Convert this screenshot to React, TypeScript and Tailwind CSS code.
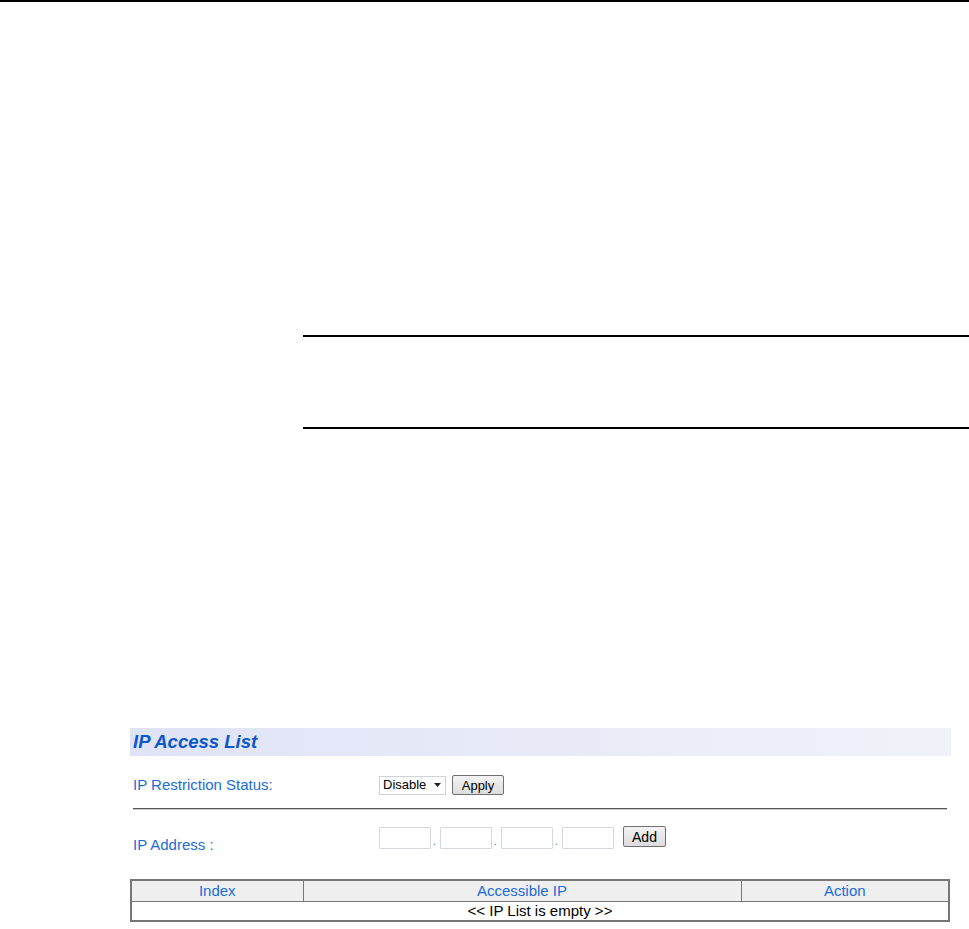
import React from 'react';

const blue = 'text-[#1c6cd6]';

function IpBox() {
  return <div className="w-[52px] h-[22px] border border-[#d4d8de] bg-white rounded-[1px]" />;
}

function Dot() {
  return <span className="text-[10px] text-[#1c6cd6] leading-none w-[5px] pb-[2px]">.</span>;
}

export default function App() {
  return (
    <div className="w-[969px] h-[929px] bg-white font-['Liberation_Sans',Arial,sans-serif] overflow-hidden">
      {/* page rule at top */}
      <div className="h-[2px] bg-black" />

      {/* empty box between rules */}
      <div className="mt-[333px] ml-[303px]">
        <div className="h-[2px] bg-black" />
        <div className="h-[90px]" />
        <div className="h-[2px] bg-black" />
      </div>

      {/* IP Access List panel */}
      <div className="mt-[299px] ml-[130px] w-[821px]">
        <div className="h-[28px] bg-gradient-to-r from-[#dfe3f6] to-[#f1f2f9] flex items-center pl-[3px]">
          <span className="text-[18.5px] font-bold italic text-[#0a57cc] leading-none">IP Access List</span>
        </div>

        <div className="mt-[19px] flex items-center h-[20px]">
          <span className={`w-[249px] pl-[3px] text-[15px] ${blue}`}>IP Restriction Status:</span>
          <div className="w-[67px] h-[19px] border border-[#cfd3d9] bg-white flex items-center pl-[3px] pr-[3px] text-[13px] text-black">
            <span className="flex-1">Disable</span>
            <svg width="8" height="5" viewBox="0 0 8 5"><path d="M0 0h7L3.5 4z" fill="#222" /></svg>
          </div>
          <button className="ml-[6px] w-[52px] h-[20px] border border-[#707070] rounded-[2px] bg-gradient-to-b from-[#f3f3f3] to-[#dcdcdc] text-[13px] text-black leading-none">
            Apply
          </button>
        </div>

        <div className="mt-[13px] ml-[3px] w-[814px] h-[2px] bg-[#555] border-b border-[#ccc]" />

        <div className="mt-[16px] flex h-[23px]">
          <span className={`w-[249px] pl-[3px] pt-[11px] text-[15px] ${blue} leading-none`}>IP Address :</span>
          <div className="flex items-end gap-[2px]">
            <IpBox />
            <Dot />
            <IpBox />
            <Dot />
            <IpBox />
            <Dot />
            <IpBox />
          </div>
          <button className="ml-[9px] w-[43px] h-[21px] border border-[#707070] rounded-[2px] bg-gradient-to-b from-[#f3f3f3] to-[#dcdcdc] text-[14px] text-black leading-none">
            Add
          </button>
        </div>

        <table className="mt-[30px] w-[820px] border-collapse border-2 border-[#777] text-[15px]">
          <thead>
            <tr className="bg-[#efefef] h-[21px]">
              <th className={`w-[172px] border border-[#777] font-normal ${blue} leading-none`}>Index</th>
              <th className={`w-[438px] border border-[#777] font-normal ${blue} leading-none`}>Accessible IP</th>
              <th className={`border border-[#777] font-normal ${blue} leading-none`}>Action</th>
            </tr>
          </thead>
          <tbody>
            <tr className="h-[20px]">
              <td colSpan={3} className="border border-[#777] text-center text-black leading-none">
                &lt;&lt; IP List is empty &gt;&gt;
              </td>
            </tr>
          </tbody>
        </table>
      </div>
    </div>
  );
}
